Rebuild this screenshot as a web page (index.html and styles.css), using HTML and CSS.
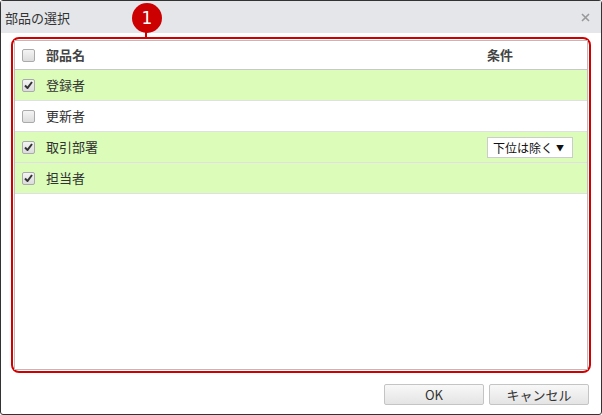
FILE: index.html
```html
<!DOCTYPE html>
<html lang="ja">
<head>
<meta charset="utf-8">
<link rel="stylesheet" href="styles.css">
</head>
<body>
<div class="dialog">
  <div class="titlebar">
    <span class="title">部品の選択</span>
    <span class="close">
      <svg width="9" height="9" viewBox="0 0 9 9"><path d="M1 1L8 8M8 1L1 8" stroke="#999" stroke-width="1.6" fill="none"/></svg>
    </span>
  </div>
  <div class="badge">1</div>
  <div class="badge-line"></div>
  <div class="content">
    <div class="annot">
      <div class="list">
        <div class="row head">
          <span class="cb"></span>
          <span class="name">部品名</span>
          <span class="cond">条件</span>
        </div>
        <div class="row on">
          <span class="cb checked"><svg width="9" height="8" viewBox="0 0 9 8"><path d="M1 4.5L3.5 7L8 1" stroke="#333" stroke-width="2" fill="none"/></svg></span>
          <span class="name">登録者</span>
        </div>
        <div class="row">
          <span class="cb"></span>
          <span class="name">更新者</span>
        </div>
        <div class="row on">
          <span class="cb checked"><svg width="9" height="8" viewBox="0 0 9 8"><path d="M1 4.5L3.5 7L8 1" stroke="#333" stroke-width="2" fill="none"/></svg></span>
          <span class="name">取引部署</span>
          <span class="select"><span class="sel-text">下位は除く</span><span class="arrow">▼</span></span>
        </div>
        <div class="row on">
          <span class="cb checked"><svg width="9" height="8" viewBox="0 0 9 8"><path d="M1 4.5L3.5 7L8 1" stroke="#333" stroke-width="2" fill="none"/></svg></span>
          <span class="name">担当者</span>
        </div>
      </div>
    </div>
  </div>
  <div class="footer">
    <button class="btn">OK</button>
    <button class="btn">キャンセル</button>
  </div>
</div>
</body>
</html>
```
FILE: styles.css
```css
* { box-sizing: border-box; }
html, body { margin: 0; padding: 0; background: #fff; }
body {
  font-family: "Noto Sans CJK JP", "Noto Sans", sans-serif;
  font-size: 13px;
  color: #333;
}
.dialog {
  position: relative;
  width: 602px;
  height: 415px;
  border: 1px solid #333;
  border-radius: 3px;
  display: flex;
  flex-direction: column;
  background: #fff;
}
.titlebar {
  height: 32px;
  background: #e4e6ea;
  display: flex;
  align-items: center;
  justify-content: space-between;
  padding: 0 11px 0 4px;
  flex: none;
}
.title { font-size: 13px; color: #333; line-height: 1; }
.close { display: flex; align-items: center; }
.badge {
  position: absolute;
  left: 131px;
  top: 2px;
  width: 30px;
  height: 30px;
  border-radius: 50%;
  background: #cc0000;
  color: #fff;
  font-family: "DejaVu Sans", "Liberation Sans", sans-serif;
  font-size: 17px;
  font-weight: normal;
  display: flex;
  align-items: center;
  justify-content: center;
}
.badge-line {
  position: absolute;
  left: 144px;
  top: 30px;
  width: 2px;
  height: 7px;
  background: #cc0000;
}
.content {
  padding: 4px 10px 0 10px;
  flex: none;
}
.annot {
  border: 2px solid #d40000;
  border-radius: 8px;
  padding: 1px;
  height: 336px;
}
.list {
  border: 1px solid #bbb;
  height: 100%;
  background: #fff;
}
.row {
  height: 31px;
  border-bottom: 1px solid #e0e0e0;
  display: flex;
  align-items: center;
  padding-left: 7px;
  position: relative;
}
.row.head {
  height: 29px;
  border-bottom: 1px solid #c8c8c8;
  font-weight: bold;
  color: #444;
}
.row.on { background: #dbfdb9; }
.name { margin-left: 11px; line-height: 1; position: relative; top: -1px; }
.cb {
  width: 13px;
  height: 13px;
  border: 1px solid #aaa;
  border-radius: 2px;
  background: linear-gradient(#f4f4f4, #dcdcdc);
  display: flex;
  align-items: center;
  justify-content: center;
  flex: none;
}
.cond { position: absolute; left: 472px; line-height: 1; top: 7px; }
.select {
  position: absolute;
  left: 472px;
  top: 5px;
  width: 86px;
  height: 21px;
  border: 1px solid #ccc;
  background: #fff;
  display: flex;
  align-items: center;
  justify-content: space-between;
  padding: 0 8px 0 5px;
  color: #111;
  white-space: nowrap;
  line-height: 1;
}
.sel-text { font-size: 12px; }
.arrow { font-size: 8px; }
.footer {
  display: flex;
  justify-content: flex-end;
  gap: 5px;
  padding: 11px 12px 0 0;
}
.btn {
  width: 100px;
  height: 21px;
  border: 1px solid #c4c4c4;
  border-radius: 2px;
  background: linear-gradient(#f8f8f8, #e4e4e4);
  font-family: "Noto Sans CJK JP", "Noto Sans", sans-serif;
  font-size: 13px;
  color: #333;
  padding: 0;
  line-height: 1;
}
```
